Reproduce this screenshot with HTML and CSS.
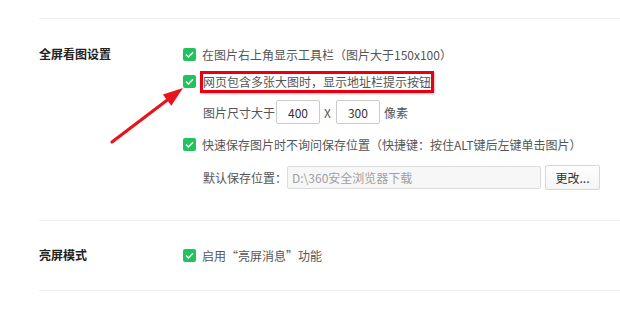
FILE: index.html
```html
<!DOCTYPE html>
<html lang="zh-CN">
<head>
<meta charset="utf-8">
<link rel="stylesheet" href="styles.css">
</head>
<body>
<div class="page">
  <div class="section first">
    <div class="label">全屏看图设置</div>
    <div class="options">
      <div class="row r1"><span class="cb"><svg viewBox="0 0 13 13" width="13" height="13"><rect width="13" height="13" rx="2" fill="#22c35e"/><path d="M3 6.6 L5.4 9 L10 4.2" fill="none" stroke="#fff" stroke-width="1.4"/></svg></span><span>在图片右上角显示工具栏（图片大于150x100）</span></div>
      <div class="row r2"><span class="cb"><svg viewBox="0 0 13 13" width="13" height="13"><rect width="13" height="13" rx="2" fill="#22c35e"/><path d="M3 6.6 L5.4 9 L10 4.2" fill="none" stroke="#fff" stroke-width="1.4"/></svg></span><span class="hl">网页包含多张大图时，显示地址栏提示按钮</span></div>
      <div class="row r3 indent"><span>图片尺寸大于</span><span class="num">400</span><span class="x">X</span><span class="num">300</span><span class="unit">像素</span></div>
      <div class="row r4"><span class="cb"><svg viewBox="0 0 13 13" width="13" height="13"><rect width="13" height="13" rx="2" fill="#22c35e"/><path d="M3 6.6 L5.4 9 L10 4.2" fill="none" stroke="#fff" stroke-width="1.4"/></svg></span><span>快速保存图片时不询问保存位置（快捷键：按住ALT键后左键单击图片）</span></div>
      <div class="row r5 indent"><span>默认保存位置：</span><span class="path">D:\360安全浏览器下载</span><span class="btn">更改...</span></div>
    </div>
  </div>
  <div class="section second">
    <div class="label">亮屏模式</div>
    <div class="options">
      <div class="row"><span class="cb"><svg viewBox="0 0 13 13" width="13" height="13"><rect width="13" height="13" rx="2" fill="#22c35e"/><path d="M3 6.6 L5.4 9 L10 4.2" fill="none" stroke="#fff" stroke-width="1.4"/></svg></span><span>启用“亮屏消息”功能</span></div>
    </div>
  </div>
</div>
<div class="mark-box"></div>
<svg class="mark-arrow" width="620" height="309" viewBox="0 0 620 309">
  <line x1="112" y1="142" x2="168" y2="99.5" stroke="#e8141c" stroke-width="3.2" stroke-linecap="round"/>
  <polygon points="183,88 171.3,105.7 162.9,94.5" fill="#e8141c"/>
</svg>
</body>
</html>
```
FILE: styles.css
```css
html, body {
  margin: 0;
  padding: 0;
  background: #ffffff;
}
body {
  position: relative;
  width: 620px;
  height: 309px;
  overflow: hidden;
  font-family: "Microsoft YaHei", "Noto Sans CJK SC", "Noto Sans", sans-serif;
  font-size: 12px;
  color: #555555;
}
.page {
  padding-top: 18px;
  padding-left: 39px;
}
.section {
  display: grid;
  grid-template-columns: 144px 1fr;
  border-top: 1px solid #efefef;
}
.section.first {
  padding-top: 22px;
  padding-bottom: 30px;
}
.section.second {
  padding-top: 21px;
  padding-bottom: 22px;
  border-bottom: 1px solid #efefef;
}
.label {
  font-weight: 700;
  color: #222222;
  line-height: 26px;
  height: 26px;
}
.options {
  display: flex;
  flex-direction: column;
}
.row {
  display: flex;
  align-items: center;
  height: 26px;
  white-space: nowrap;
}
.r2 { margin-top: 1px; }
.r3 { margin-top: 6px; height: 24px; }
.r4 { margin-top: 7px; }
.r5 { margin-top: 8px; height: 25px; }
.indent { padding-left: 20px; }
.cb {
  display: flex;
  width: 13px;
  height: 13px;
  margin-right: 6px;
}
.num {
  box-sizing: border-box;
  width: 44px;
  height: 24px;
  border: 1px solid #cccccc;
  border-radius: 2px;
  display: flex;
  align-items: center;
  justify-content: center;
  color: #333333;
  margin-left: 1px;
}
.x {
  margin: 0 4px;
}
.unit {
  margin-left: 4px;
}
.path {
  box-sizing: border-box;
  width: 254px;
  height: 23px;
  border: 1px solid #dcdcdc;
  border-radius: 2px;
  background: #f7f7f7;
  color: #a0a0a0;
  display: flex;
  align-items: center;
  padding-left: 4px;
}
.btn {
  box-sizing: border-box;
  width: 55px;
  height: 25px;
  margin-left: 4px;
  border: 1px solid #d6d6d6;
  border-radius: 2px;
  background: linear-gradient(#ffffff, #f4f4f4);
  color: #333333;
  display: flex;
  align-items: center;
  justify-content: center;
}
.hl {
  padding: 0 1px;
}
.mark-box {
  position: absolute;
  left: 200px;
  top: 71px;
  width: 234px;
  height: 22px;
  box-sizing: border-box;
  border: 3px solid #e60012;
  box-shadow: 1px 1px 2px rgba(0, 0, 0, 0.25);
}
.mark-arrow {
  position: absolute;
  left: 0;
  top: 0;
}
```
